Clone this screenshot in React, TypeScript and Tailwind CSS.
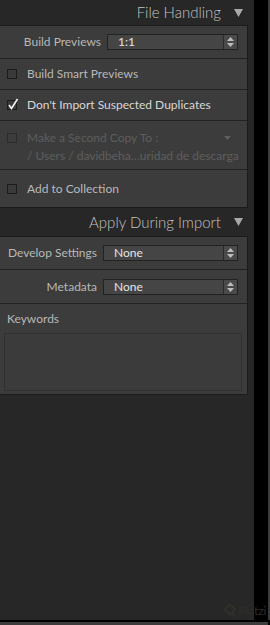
import React from "react";

function Checkbox({ checked }: { checked?: boolean }) {
  return (
    <span className="relative inline-block w-[10px] h-[10px] shrink-0 border border-[#1c1c1c] bg-[#3a3a3a]">
      {checked && (
        <svg className="absolute left-[0px] top-[-3px]" width="11" height="12" viewBox="0 0 11 12">
          <path d="M1 7 L3.5 10.5 L9.5 1" fill="none" stroke="#f2f2f2" strokeWidth="1.6" />
        </svg>
      )}
    </span>
  );
}

function Select({ value, width }: { value: string; width: string }) {
  return (
    <div className={`flex h-[16px] ${width} border border-[#222] bg-[#454545]`}>
      <span className="flex-1 pl-[10px] text-[12px] leading-[14px] text-[#e4e4e4]">{value}</span>
      <span className="flex w-[14px] flex-col items-center justify-center gap-[2px] border-l border-[#2a2a2a] bg-[#4a4a4a]">
        <svg width="7" height="4" viewBox="0 0 7 4">
          <path d="M0 4 L3.5 0 L7 4 Z" fill="#bdbdbd" />
        </svg>
        <svg width="7" height="4" viewBox="0 0 7 4">
          <path d="M0 0 L3.5 4 L7 0 Z" fill="#bdbdbd" />
        </svg>
      </span>
    </div>
  );
}

function Header({ title, height }: { title: string; height: string }) {
  return (
    <div className={`flex ${height} items-center justify-end gap-[13px] pr-[11px] text-[15px] font-light text-[#c2c2c2]`}>
      <span>{title}</span>
      <svg width="9" height="8" viewBox="0 0 9 8">
        <path d="M0 0 L9 0 L4.5 8 Z" fill="#a9a9a9" />
      </svg>
    </div>
  );
}

export default function App() {
  return (
    <div
      className="relative flex h-[625px] w-[270px] flex-col bg-black"
      style={{ fontFamily: "Lato, 'Liberation Sans', sans-serif" }}
    >
      <div className="flex flex-1">
        <div className="flex w-[254px] flex-col bg-[#272727]">
          <Header title="File Handling" height="h-[25px]" />

          <div className="w-[248px] border-y border-r border-[#1b1b1b] bg-[#3c3c3c] text-[12px] text-[#b8b8b8]">
            <div className="flex h-[33px] items-center border-b border-[#222]">
              <span className="w-[107px] pr-[6px] text-right">Build Previews</span>
              <Select value="1:1" width="w-[131px]" />
            </div>
            <div className="flex h-[31px] items-center gap-[10px] border-b border-[#222] pl-[7px]">
              <Checkbox />
              <span>Build Smart Previews</span>
            </div>
            <div className="flex h-[31px] items-center gap-[10px] border-b border-[#222] pl-[7px] text-[#d8d8d8]">
              <Checkbox checked />
              <span>Don't Import Suspected Duplicates</span>
            </div>
            <div className="flex h-[49px] border-b border-[#222] pl-[7px] pt-[8px] text-[#5e5e5e]">
              <span className="mt-[4px] inline-block h-[10px] w-[10px] shrink-0 border border-[#2c2c2c]" />
              <div className="ml-[10px] flex flex-1 flex-col leading-[18px]">
                <div className="flex items-center justify-between pr-[16px]">
                  <span>Make a Second Copy To :</span>
                  <svg width="7" height="4" viewBox="0 0 7 4">
                    <path d="M0 0 L7 0 L3.5 4 Z" fill="#5e5e5e" />
                  </svg>
                </div>
                <span className="whitespace-nowrap">/ Users / davidbeha…uridad de descarga</span>
              </div>
            </div>
            <div className="flex h-[37px] items-center gap-[10px] pl-[7px]">
              <Checkbox />
              <span>Add to Collection</span>
            </div>
          </div>

          <Header title="Apply During Import" height="h-[28px]" />

          <div className="w-[248px] border-y border-r border-[#1b1b1b] bg-[#3c3c3c] text-[12px] text-[#b8b8b8]">
            <div className="flex h-[33px] items-center border-b border-[#222]">
              <span className="w-[103px] pr-[6px] text-right">Develop Settings</span>
              <Select value="None" width="w-[135px]" />
            </div>
            <div className="flex h-[34px] items-center border-b border-[#222]">
              <span className="w-[103px] pr-[6px] text-right">Metadata</span>
              <Select value="None" width="w-[135px]" />
            </div>
            <div className="flex h-[90px] flex-col px-[4px] pt-[7px]">
              <span className="pl-[3px] leading-[16px]">Keywords</span>
              <div className="mt-[6px] h-[58px] w-[238px] border border-[#313131] bg-[#3b3b3b]" />
            </div>
          </div>

          <div className="flex-1" />
        </div>
        <div className="w-[14px] bg-black" />
        <div className="w-[2px] bg-[#3c3c3c]" />
      </div>
      <div className="h-[2px] bg-black" />
      <div className="h-[3px] w-[268px] bg-[#3c3c3c]" />

      <div className="absolute left-[223px] top-[603px] flex items-center gap-[1px] text-[12px] leading-[14px] text-[#2d2f28]">
        <svg width="14" height="15" viewBox="0 0 15 16">
          <path d="M7.5 1.5 L13 7 L9.5 10.5 L12.5 14 M7.5 1.5 L2 7 L7.5 12.5 L9.5 10.5" fill="none" stroke="#30322a" strokeWidth="2" />
        </svg>
        <span>Platzi</span>
      </div>
    </div>
  );
}
